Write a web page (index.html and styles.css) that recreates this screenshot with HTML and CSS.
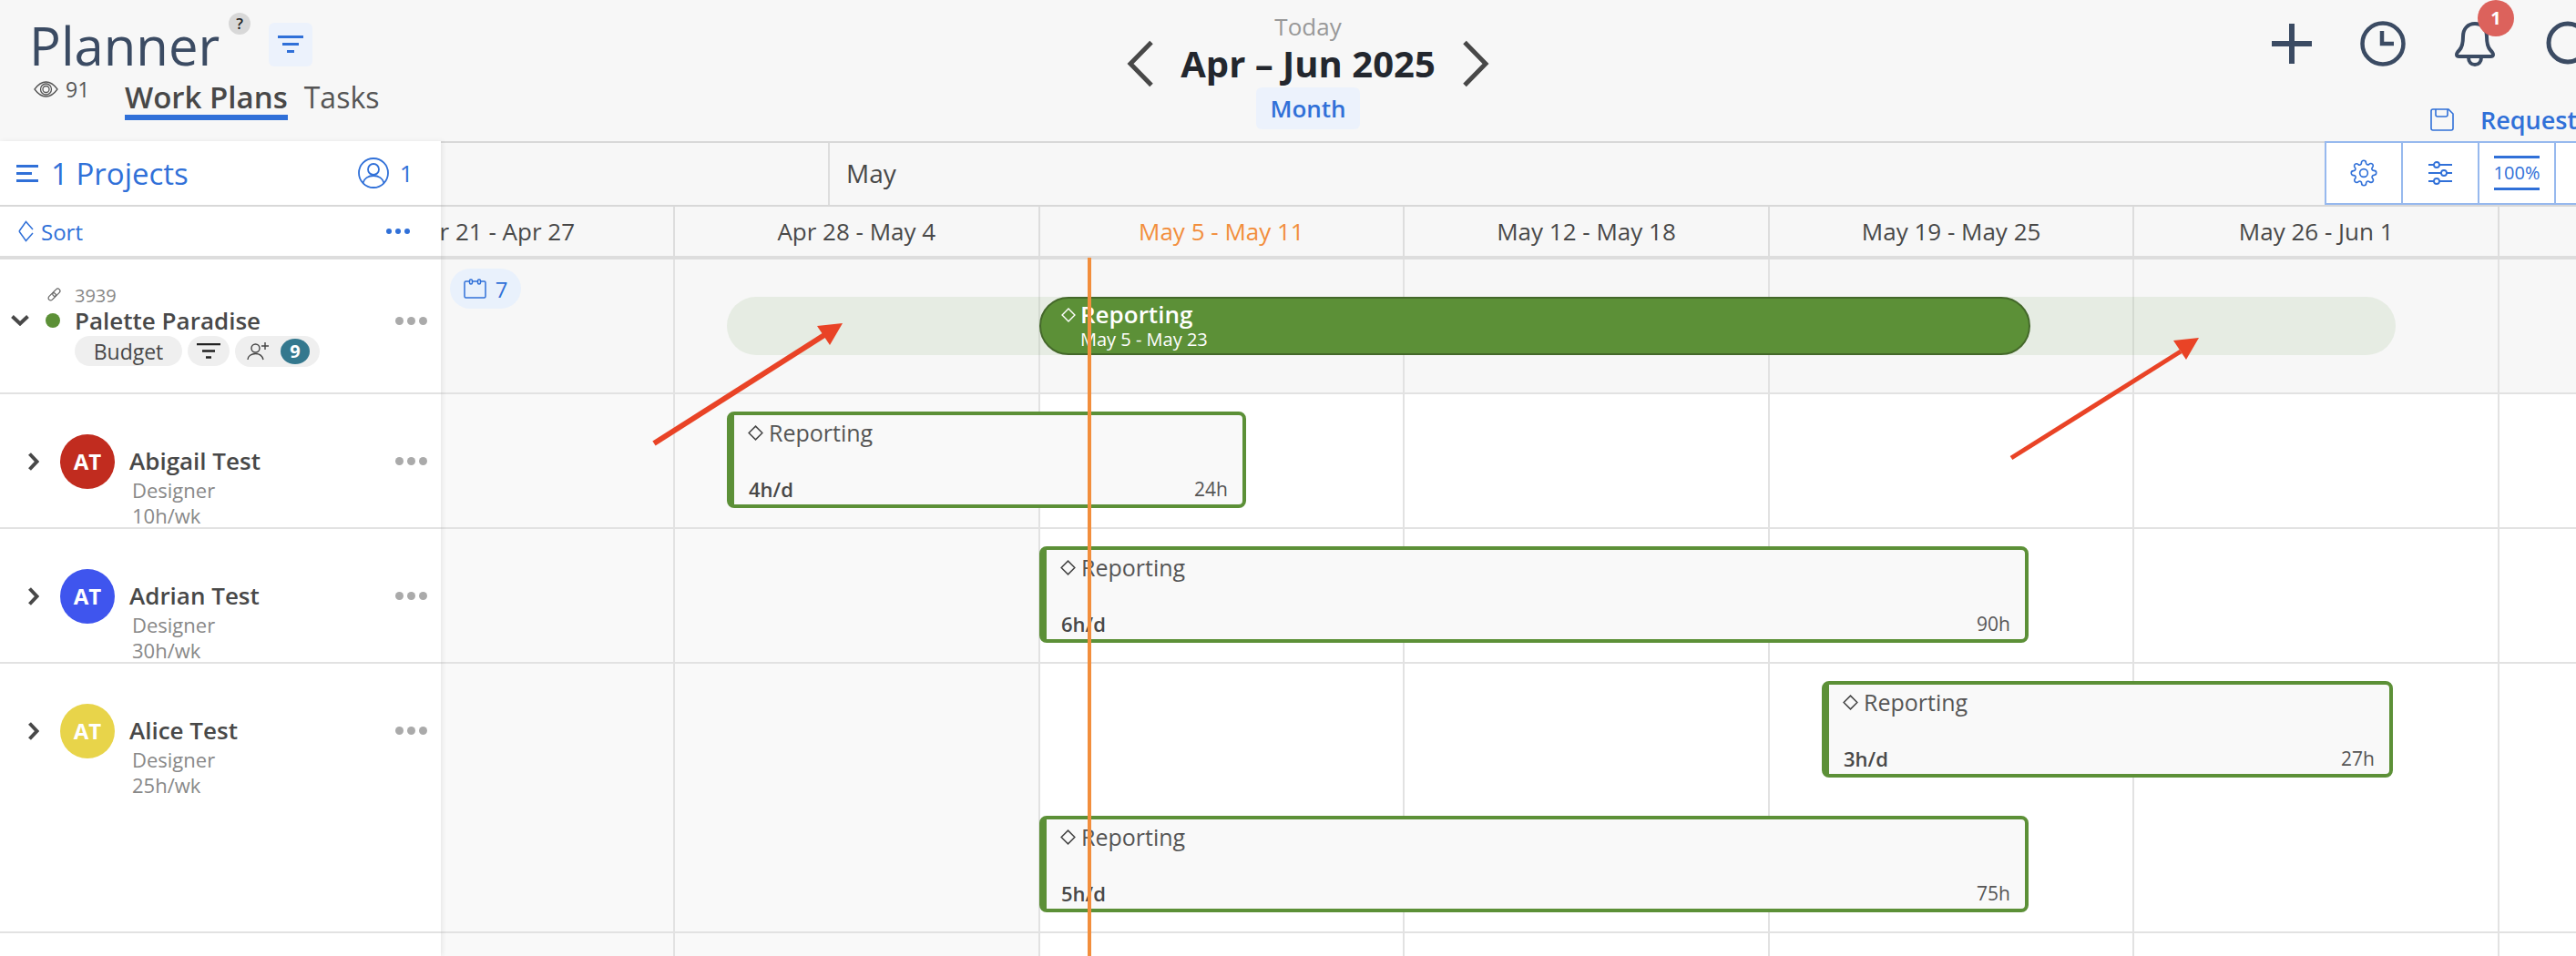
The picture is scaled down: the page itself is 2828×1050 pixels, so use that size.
FILE: index.html
```html
<!DOCTYPE html>
<html lang="en">
<head>
<meta charset="utf-8">
<title>Planner</title>
<link rel="stylesheet" href="styles.css">
</head>
<body>
<div class="page">
  <header class="header">
    <div class="head-left">
      <div class="title-row">
        <h1 class="title">Planner</h1>
        <span class="help">?</span>
        <span class="filter-btn">
          <svg width="28" height="20" viewBox="0 0 28 20"><path d="M0 1.500h28M5 9.500h18M10 17.500h8" stroke="#3070d8" stroke-width="3" fill="none"/></svg>
        </span>
      </div>
      <div class="sub-row">
        <span class="views">
          <svg width="27" height="18" viewBox="0 0 27 18" fill="none" stroke="#555" stroke-width="1.300"><path d="M1 9C5 3.500 9 1 13.500 1S22 3.500 26 9c-4 5.500-8 8-12.500 8S5 14.500 1 9z"/><circle cx="13.500" cy="9" r="6"/><circle cx="13.500" cy="9" r="3.500"/></svg>
          91
        </span>
        <nav class="tabs">
          <span class="tab tab-active">Work Plans</span>
          <span class="tab">Tasks</span>
        </nav>
      </div>
    </div>
    <div class="head-center">
      <div class="today">Today</div>
      <div class="range">
        <svg width="30" height="52" viewBox="0 0 30 52" fill="none" stroke="#484848" stroke-width="5"><path d="M27 2.500 4 26l23 23.500"/></svg>
        <span class="range-text">Apr – Jun 2025</span>
        <svg width="30" height="52" viewBox="0 0 30 52" fill="none" stroke="#484848" stroke-width="5"><path d="M3 2.500 26 26 3 49.500"/></svg>
      </div>
      <div class="month-pill">Month</div>
    </div>
    <div class="head-right">
      <div class="head-icons">
        <svg class="icon-plus" width="44" height="44" viewBox="0 0 44 44" fill="none" stroke="#3b4b63" stroke-width="6"><path d="M22 0v44M0 22h44"/></svg>
        <svg class="icon-clock" width="50" height="50" viewBox="0 0 50 50" fill="none" stroke="#3b4b63" stroke-width="4.500"><circle cx="25" cy="25" r="22.500"/><path d="M24 11v14h13"/></svg>
        <span class="bell">
          <svg width="44" height="50" viewBox="0 0 44 50" fill="none" stroke="#3b4b63" stroke-width="4"><path d="M22 3c-8 0-13 6-13 14 0 7-1 12-4 15-2 2-3 3-3 5 0 1 1 2 3 2h34c2 0 3-1 3-2 0-2-1-3-3-5-3-3-4-8-4-15 0-8-5-14-13-14zM15 40c0 5 3 8 7 8s7-3 7-8"/></svg>
          <span class="bell-badge">1</span>
        </span>
        <svg class="search-icon" width="60" height="50" viewBox="0 0 60 50" fill="none" stroke="#3b4b63" stroke-width="5"><circle cx="24" cy="24" r="21"/><path d="M39 39l12 11"/></svg>
      </div>
      <div class="head-requests">
        <svg width="26" height="25" viewBox="0 0 26 25" fill="none" stroke="#3070d8" stroke-width="1.600"><path d="M3 1h17l5 5v16a2 2 0 0 1-2 2H3a2 2 0 0 1-2-2V3a2 2 0 0 1 2-2z"/><path d="M6 1v6a2 2 0 0 0 2 2h9a2 2 0 0 0 2-2V1"/></svg>
        <span class="requests">Requests</span>
      </div>
    </div>
  </header>

  <main class="main">
    <aside class="side">
      <div class="side-projects">
        <svg width="24" height="19" viewBox="0 0 24 19"><path d="M0 1.500h24M0 9.500h17M0 17.500h24" stroke="#3070d8" stroke-width="3" fill="none"/></svg>
        <span class="projects-label">1 Projects</span>
        <svg class="person-ring" width="34" height="34" viewBox="0 0 34 34" fill="none" stroke="#3070d8" stroke-width="1.800"><circle cx="17" cy="17" r="16"/><circle cx="17" cy="13" r="6"/><path d="M5.500 28c1-5 6-8 11.500-8s10.500 3 11.500 8"/></svg>
        <span class="ring-count">1</span>
      </div>
      <div class="side-sort">
        <svg width="17" height="24" viewBox="0 0 17 24" fill="none" stroke="#3070d8" stroke-width="1.500"><path d="M1 12l7.500-10.500L16 10M1 12l7.500 10.500L16 14"/></svg>
        <span class="sort-label">Sort</span>
        <span class="dots-blue"><i></i><i></i><i></i></span>
      </div>

      <div class="side-project">
        <svg class="chev-down" width="20" height="12" viewBox="0 0 20 12" fill="none" stroke="#484848" stroke-width="4"><path d="M1.500 1.500 10 9.500l8.500-8"/></svg>
        <span class="status-dot"></span>
        <div class="project-info">
          <div class="project-id">
            <svg class="link-icon" width="17" height="17" viewBox="0 0 17 17" fill="none" stroke="#666" stroke-width="1.200"><g transform="rotate(-45 8.500 8.500)"><rect x="0.500" y="6" width="9.500" height="5" rx="2.500"/><rect x="7" y="6" width="9.500" height="5" rx="2.500"/></g></svg>
            <span>3939</span>
          </div>
          <div class="project-name">Palette Paradise</div>
          <div class="pills">
            <span class="pill pill-budget">Budget</span>
            <span class="pill pill-filter"><svg width="26" height="17" viewBox="0 0 26 17"><path d="M0 1h26M6 8.500h14M10 15.500h6" stroke="#222" stroke-width="2.500" fill="none"/></svg></span>
            <span class="pill pill-members">
              <svg width="26" height="20" viewBox="0 0 26 20" fill="none" stroke="#444" stroke-width="1.400"><circle cx="9.500" cy="6.500" r="4.500"/><path d="M1 19c0-4 4-6.500 8.500-6.500S17 15 18 19M20 0v8M16 4h8"/></svg>
              <span class="member-count">9</span>
            </span>
          </div>
        </div>
        <span class="dots-gray"><i></i><i></i><i></i></span>
      </div>

      <div class="side-person">
        <svg class="chev-right" width="12" height="20" viewBox="0 0 12 20" fill="none" stroke="#484848" stroke-width="4"><path d="M1.500 1.500 9.500 10l-8 8.500"/></svg>
        <span class="avatar avatar-red">AT</span>
        <div class="person-info">
          <div class="person-name">Abigail Test</div>
          <div class="person-meta">Designer</div>
          <div class="person-meta">10h/wk</div>
        </div>
        <span class="dots-gray"><i></i><i></i><i></i></span>
      </div>
      <div class="side-person">
        <svg class="chev-right" width="12" height="20" viewBox="0 0 12 20" fill="none" stroke="#484848" stroke-width="4"><path d="M1.500 1.500 9.500 10l-8 8.500"/></svg>
        <span class="avatar avatar-blue">AT</span>
        <div class="person-info">
          <div class="person-name">Adrian Test</div>
          <div class="person-meta">Designer</div>
          <div class="person-meta">30h/wk</div>
        </div>
        <span class="dots-gray"><i></i><i></i><i></i></span>
      </div>
      <div class="side-person side-person-tall">
        <svg class="chev-right" width="12" height="20" viewBox="0 0 12 20" fill="none" stroke="#484848" stroke-width="4"><path d="M1.500 1.500 9.500 10l-8 8.500"/></svg>
        <span class="avatar avatar-yellow">AT</span>
        <div class="person-info">
          <div class="person-name">Alice Test</div>
          <div class="person-meta">Designer</div>
          <div class="person-meta">25h/wk</div>
        </div>
        <span class="dots-gray"><i></i><i></i><i></i></span>
      </div>
    </aside>

    <section class="timeline">
      <div class="month-row">
        <div class="month-gap"></div>
        <div class="month-may">May</div>
        <div class="tools">
          <span class="tool">
            <svg width="30" height="30" viewBox="0 0 24 24" fill="none" stroke="#3070d8" stroke-width="1.300" stroke-linejoin="round"><circle cx="12" cy="12" r="3.500"/><path d="M19.400 15a1.650 1.650 0 0 0 .33 1.820l.06.06a2 2 0 1 1-2.830 2.830l-.06-.06a1.650 1.650 0 0 0-2.800 1.170V21a2 2 0 1 1-4 0v-.09A1.650 1.650 0 0 0 7.300 19.700l-.06.06a2 2 0 1 1-2.830-2.830l.06-.06a1.650 1.650 0 0 0-1.170-2.800H3a2 2 0 1 1 0-4h.09A1.650 1.650 0 0 0 4.300 7.300l-.06-.06a2 2 0 1 1 2.830-2.830l.06.06a1.650 1.650 0 0 0 2.800-1.170V3a2 2 0 1 1 4 0v.09a1.650 1.650 0 0 0 2.800 1.170l.06-.06a2 2 0 1 1 2.830 2.830l-.06.06a1.650 1.650 0 0 0 1.170 2.800H21a2 2 0 1 1 0 4h-.09a1.650 1.650 0 0 0-1.510 1z"/></svg>
          </span>
          <span class="tool">
            <svg width="26" height="26" viewBox="0 0 26 26" fill="none" stroke="#3070d8" stroke-width="1.800"><path d="M0 4h6M12 4h14M0 13h14M20 13h6M0 22h6M12 22h14"/><circle cx="9" cy="4" r="3"/><circle cx="17" cy="13" r="3"/><circle cx="9" cy="22" r="3"/></svg>
          </span>
          <span class="tool"><span class="zoom-level">100%</span></span>
          <span class="tool"></span>
        </div>
      </div>
      <div class="weeks">
        <div class="week week-first">Apr 21 - Apr 27</div>
        <div class="week">Apr 28 - May 4</div>
        <div class="week week-now">May 5 - May 11</div>
        <div class="week">May 12 - May 18</div>
        <div class="week">May 19 - May 25</div>
        <div class="week">May 26 - Jun 1</div>
        <div class="week"></div>
      </div>
      <div class="board">
        <div class="gridlines"><i></i><i></i><i></i><i></i><i></i><i></i></div>

        <div class="track track-project">
          <span class="chip">
            <svg width="25" height="22" viewBox="0 0 25 22" fill="none" stroke="#3070d8" stroke-width="1.500"><path d="M6 3H2.500A1.500 1.500 0 0 0 1 4.500v15A1.500 1.500 0 0 0 2.500 21h20a1.500 1.500 0 0 0 1.500-1.500v-15A1.500 1.500 0 0 0 22.500 3H19M10 3h5"/><rect x="6.500" y="1" width="3" height="5" rx="1.500"/><rect x="15.500" y="1" width="3" height="5" rx="1.500"/></svg>
            7
          </span>
          <div class="phase-bg"></div>
          <div class="phase">
            <svg class="diamond" width="16" height="16" viewBox="0 0 15 15" fill="none" stroke="#fff" stroke-width="1.300"><path d="M7.500 1 14 7.500 7.500 14 1 7.500z"/></svg>
            <div>
              <div class="phase-name">Reporting</div>
              <div class="phase-dates">May 5 - May 23</div>
            </div>
          </div>
        </div>

        <div class="track track-person">
          <div class="bar bar-abigail">
            <div class="bar-top"><svg class="diamond" width="17" height="17" viewBox="0 0 15 15" fill="none" stroke="#444" stroke-width="1.300"><path d="M7.500 1 14 7.500 7.500 14 1 7.500z"/></svg>Reporting</div>
            <div class="bar-bottom"><b>4h/d</b><span>24h</span></div>
          </div>
        </div>
        <div class="track track-person">
          <div class="bar bar-adrian">
            <div class="bar-top"><svg class="diamond" width="17" height="17" viewBox="0 0 15 15" fill="none" stroke="#444" stroke-width="1.300"><path d="M7.500 1 14 7.500 7.500 14 1 7.500z"/></svg>Reporting</div>
            <div class="bar-bottom"><b>6h/d</b><span>90h</span></div>
          </div>
        </div>
        <div class="track track-person track-tall">
          <div class="bar bar-alice-a">
            <div class="bar-top"><svg class="diamond" width="17" height="17" viewBox="0 0 15 15" fill="none" stroke="#444" stroke-width="1.300"><path d="M7.500 1 14 7.500 7.500 14 1 7.500z"/></svg>Reporting</div>
            <div class="bar-bottom"><b>3h/d</b><span>27h</span></div>
          </div>
          <div class="bar bar-alice-b">
            <div class="bar-top"><svg class="diamond" width="17" height="17" viewBox="0 0 15 15" fill="none" stroke="#444" stroke-width="1.300"><path d="M7.500 1 14 7.500 7.500 14 1 7.500z"/></svg>Reporting</div>
            <div class="bar-bottom"><b>5h/d</b><span>75h</span></div>
          </div>
        </div>
        <div class="track track-person track-end"></div>
        <div class="now-line"></div>
      </div>
    </section>
  </main>

  <svg class="annot" width="2828" height="1050" viewBox="0 0 2828 1050">
    <path d="M718 487 905 368" stroke="#e94326" stroke-width="6" fill="none"/>
    <polygon points="925,355 897,358 911,379" fill="#e94326"/>
    <path d="M2208 503 2394 386" stroke="#e94326" stroke-width="5" fill="none"/>
    <polygon points="2414,371 2386,374 2400,395" fill="#e94326"/>
  </svg>
</div>
</body>
</html>
```

FILE: styles.css
```css
* { box-sizing: border-box; }
html, body { margin: 0; padding: 0; }
body { font-family: "Open Sans", "Noto Sans", sans-serif; color: #444; background: #f7f7f7; }
.page { position: relative; width: 2828px; height: 1050px; overflow: hidden; }

/* header */
.header { height: 155px; display: grid; grid-template-columns: 1238px 396px 1fr; background: #f7f7f7; }
.head-left { padding: 14px 0 0 32px; }
.title-row { display: flex; align-items: flex-start; height: 72px; }
.title { margin: 0; font-size: 58px; line-height: 72px; font-weight: 500; color: #3b4b63; }
.help { width: 24px; height: 24px; margin: 0 0 0 10px; border-radius: 50%; background: #d8d8d8; color: #222; font-size: 17px; font-weight: 600; line-height: 24px; text-align: center; }
.filter-btn { width: 48px; height: 48px; margin: 11px 0 0 20px; border-radius: 6px; background: #ecf2fc; display: flex; align-items: center; justify-content: center; }
.sub-row { display: flex; align-items: flex-start; }
.views { width: 105px; display: flex; align-items: center; gap: 8px; padding-left: 5px; font-size: 23px; line-height: 24px; color: #555; }
.tabs { display: flex; gap: 18px; padding-top: 1px; }
.tab { height: 45px; font-size: 32px; line-height: 40px; color: #555; }
.tab-active { font-weight: 600; color: #484848; border-bottom: 6px solid #3070d8; font-size: 33px; }

.head-center { display: flex; flex-direction: column; align-items: center; padding-top: 14px; }
.today { font-size: 26px; line-height: 30px; color: #999; }
.range { display: flex; align-items: center; gap: 29px; height: 52px; }
.range-text { font-size: 40px; line-height: 52px; font-weight: 700; color: #23272e; white-space: nowrap; }
.month-pill { width: 114px; height: 46px; border-radius: 6px; background: #ecf2fc; color: #3070d8; font-size: 26px; font-weight: 600; line-height: 46px; text-align: center; }

.head-right { display: flex; flex-direction: column; overflow: hidden; }
.head-icons { display: flex; align-items: center; height: 96px; padding-left: 860px; white-space: nowrap; }
.head-icons svg { flex: none; }
.icon-clock { margin-left: 53px; }
.bell { position: relative; display: flex; flex: none; margin-left: 54px; }
.bell-badge { position: absolute; left: 25px; top: -23px; width: 40px; height: 40px; border-radius: 50%; background: #dc625c; color: #fff; font-size: 20px; font-weight: 700; line-height: 40px; text-align: center; }
.search-icon { margin-left: 56px; }
.head-requests { display: flex; align-items: center; gap: 32px; padding-left: 1034px; height: 40px; margin-top: 15px; white-space: nowrap; }
.head-requests svg { flex: none; }
.requests { font-size: 27px; font-weight: 600; color: #3070d8; margin-left: -3px; }

/* main */
.main { display: flex; height: 895px; }
.side { position: relative; z-index: 8; flex: none; width: 484px; background: #fff; box-shadow: 2px 0 5px rgba(0,0,0,.07); }
.side-projects { height: 72px; display: flex; align-items: center; padding-left: 18px; border-bottom: 2px solid #d8d8d8; }
.projects-label { margin-left: 14px; font-size: 33px; font-weight: 500; color: #3070d8; }
.person-ring { margin-left: 186px; }
.ring-count { margin-left: 12px; font-size: 26px; color: #3070d8; }
.side-sort { height: 58px; display: flex; align-items: center; padding-left: 20px; border-bottom: 4px solid #ddd; }
.sort-label { margin-left: 8px; font-size: 24px; color: #3070d8; }
.dots-blue { display: flex; gap: 4px; margin-left: auto; margin-right: 34px; }
.dots-blue i { width: 6px; height: 6px; border-radius: 50%; background: #3070d8; }

.dots-gray { display: flex; gap: 4px; margin-left: auto; margin-right: 15px; flex: none; }
.dots-gray i { width: 9px; height: 9px; border-radius: 50%; background: #aaa; }

.side-project { height: 148px; display: flex; align-items: flex-start; border-bottom: 2px solid #e2e2e2; }
.side-project .dots-gray { margin-top: 63px; }
.chev-down { flex: none; margin: 61px 0 0 12px; }
.status-dot { flex: none; width: 16px; height: 16px; margin: 59px 0 0 18px; border-radius: 50%; background: #5c9037; }
.project-info { margin-left: 16px; padding-top: 27px; }
.project-id { display: flex; align-items: center; height: 24px; font-size: 20px; color: #888; position: relative; }
.link-icon { position: absolute; left: -31px; top: 3px; }
.project-name { margin-top: -2px; font-size: 26px; line-height: 36px; font-weight: 600; color: #484848; white-space: nowrap; }
.pills { display: flex; gap: 6px; margin-top: -1px; }
.pill { height: 33px; border-radius: 17px; background: #efefef; display: flex; align-items: center; justify-content: center; }
.pill-budget { width: 118px; font-size: 23px; color: #484848; }
.pill-filter { width: 46px; }
.pill-members { width: 93px; height: 34px; justify-content: flex-start; gap: 11px; padding-left: 13px; }
.member-count { width: 32px; height: 28px; border-radius: 50%; background: #34788e; color: #fff; font-size: 20px; font-weight: 700; line-height: 28px; text-align: center; }

.side-person { height: 148px; display: flex; align-items: flex-start; border-bottom: 2px solid #e2e2e2; }
.side-person .dots-gray { margin-top: 69px; }
.side-person-tall { height: 296px; }
.chev-right { flex: none; margin: 64px 0 0 31px; }
.avatar { flex: none; width: 60px; height: 60px; margin: 44px 0 0 23px; border-radius: 50%; color: #fff; font-size: 24px; font-weight: 700; line-height: 60px; text-align: center; }
.avatar-red { background: #c12c1f; }
.avatar-blue { background: #3f55ee; }
.avatar-yellow { background: #e8d44a; }
.person-info { margin-left: 19px; padding-top: 55px; }
.person-name { margin-left: -3px; font-size: 26px; line-height: 36px; font-weight: 600; color: #484848; white-space: nowrap; }
.person-meta { font-size: 22px; line-height: 29px; margin-top: -1px; color: #888; white-space: nowrap; }
.person-name + .person-meta { margin-top: 0; }

/* timeline */
.timeline { position: relative; flex: 1; min-width: 0; overflow: hidden; }
.month-row { display: flex; height: 72px; border-top: 2px solid #d8d8d8; border-bottom: 2px solid #d8d8d8; }
.month-gap { flex: none; width: 427px; border-right: 2px solid #ddd; }
.month-may { flex: none; width: 1641px; padding-left: 18px; font-size: 28px; line-height: 66px; color: #484848; }
.tools { flex: none; display: flex; height: 70px; margin-top: -2px; border: 2px solid #97b9ee; background: #fff; }
.tool { flex: none; width: 84px; display: flex; align-items: center; justify-content: center; border-right: 2px solid #97b9ee; }
.zoom-level { padding: 3px 0; font-size: 20px; line-height: 26px; color: #3070d8; border-top: 3px solid #3070d8; border-bottom: 3px solid #3070d8; }

.weeks { display: grid; grid-template-columns: 257px repeat(6, 400.6px) 85px; height: 58px; border-bottom: 4px solid #ddd; overflow: hidden; }
.week { display: flex; align-items: center; justify-content: center; font-size: 26px; color: #484848; white-space: nowrap; border-right: 2px solid #ddd; overflow: hidden; }
.week:last-child { border-right: 0; }
.week-first { justify-content: flex-end; padding-right: 108px; }
.week-now { color: #f28e3c; font-weight: 500; }

.board { position: relative; height: 765px; }
.gridlines { position: absolute; inset: 0; z-index: 1; display: grid; grid-template-columns: 257px repeat(6, 400.6px); pointer-events: none; }
.gridlines i { border-right: 2px solid #e2e2e2; }

.track { position: relative; height: 148px; border-bottom: 2px solid #e2e2e2; }
.track-project { background: #f7f7f7; }
.track-person { background: linear-gradient(to right, #f9f9f9 656px, #fff 656px); }
.track-tall { height: 296px; }
.track-end { height: 25px; border-bottom: 0; }

.chip { position: absolute; z-index: 2; left: 10px; top: 10px; width: 78px; height: 44px; border-radius: 22px; background: #e9f1fc; display: flex; align-items: center; justify-content: center; gap: 10px; font-size: 24px; color: #3070d8; }
.phase-bg { position: absolute; z-index: 2; left: 314px; top: 41px; width: 1832px; height: 64px; border-radius: 32px; background: rgba(92,144,55,.1); }
.phase { position: absolute; z-index: 3; left: 657px; top: 41px; width: 1088px; height: 64px; border-radius: 32px; background: #5c9037; border: 2px solid #44682a; color: #fff; display: flex; align-items: flex-start; padding: 2px 0 0 22px; gap: 5px; }
.phase .diamond { flex: none; margin-top: 8px; }
.phase-name { font-size: 26px; line-height: 30px; font-weight: 600; white-space: nowrap; }
.phase-dates { font-size: 20px; line-height: 25px; font-weight: 500; white-space: nowrap; }

.bar { position: absolute; z-index: 3; height: 106px; border: 4px solid #5c9037; border-left-width: 8px; border-radius: 8px; background: #f9f9f9; display: flex; flex-direction: column; justify-content: space-between; padding: 3px 16px 3px 16px; }
.bar-abigail { left: 314px; top: 19px; width: 570px; }
.bar-adrian { left: 657px; top: 19px; width: 1086px; }
.bar-alice-a { left: 1516px; top: 19px; width: 627px; }
.bar-alice-b { left: 657px; top: 167px; width: 1086px; }
.bar-top { display: flex; align-items: center; gap: 6px; font-size: 25px; line-height: 32px; color: #555; }
.bar-top .diamond { margin-left: -1px; }
.bar-bottom { display: flex; justify-content: space-between; align-items: center; font-size: 21px; line-height: 28px; color: #555; }
.bar-bottom b { font-size: 22px; font-weight: 600; color: #484848; }

.now-line { position: absolute; z-index: 5; left: 710px; top: -2px; bottom: 0; width: 4px; background: #f28e3c; }
.annot { position: absolute; left: 0; top: 0; z-index: 9; pointer-events: none; }
```
